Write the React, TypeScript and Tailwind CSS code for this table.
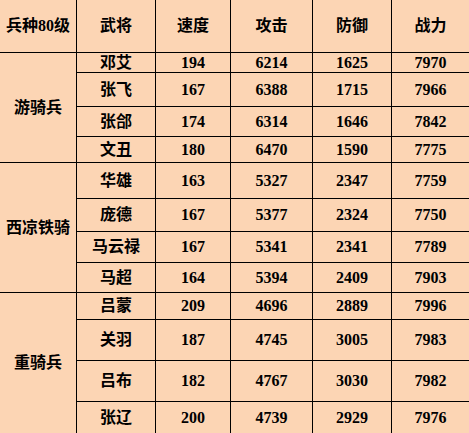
import React from "react";

type Row = { name: string; spd: string; atk: string; def: string; pow: string };
type Group = { label: string; rows: Row[] };

const groups: Group[] = [
  {
    label: "游骑兵",
    rows: [
      { name: "邓艾", spd: "194", atk: "6214", def: "1625", pow: "7970" },
      { name: "张飞", spd: "167", atk: "6388", def: "1715", pow: "7966" },
      { name: "张郃", spd: "174", atk: "6314", def: "1646", pow: "7842" },
      { name: "文丑", spd: "180", atk: "6470", def: "1590", pow: "7775" },
    ],
  },
  {
    label: "西凉铁骑",
    rows: [
      { name: "华雄", spd: "163", atk: "5327", def: "2347", pow: "7759" },
      { name: "庞德", spd: "167", atk: "5377", def: "2324", pow: "7750" },
      { name: "马云禄", spd: "167", atk: "5341", def: "2341", pow: "7789" },
      { name: "马超", spd: "164", atk: "5394", def: "2409", pow: "7903" },
    ],
  },
  {
    label: "重骑兵",
    rows: [
      { name: "吕蒙", spd: "209", atk: "4696", def: "2889", pow: "7996" },
      { name: "关羽", spd: "187", atk: "4745", def: "3005", pow: "7983" },
      { name: "吕布", spd: "182", atk: "4767", def: "3030", pow: "7982" },
      { name: "张辽", spd: "200", atk: "4739", def: "2929", pow: "7976" },
    ],
  },
];

const headers = ["兵种80级", "武将", "速度", "攻击", "防御", "战力"];

export default function App() {
  const cells: React.ReactNode[] = [];
  headers.forEach((h, i) => {
    cells.push(
      <div
        key={"h" + i}
        className={
          i === 5
            ? "flex items-center justify-center border-b border-black"
            : "flex items-center justify-center border-b border-r border-black"
        }
      >
        {h}
      </div>
    );
  });
  groups.forEach((g, gi) => {
    const lastGroup = gi === groups.length - 1;
    g.rows.forEach((r, ri) => {
      const lastRow = lastGroup && ri === g.rows.length - 1;
      if (ri === 0) {
        cells.push(
          <div
            key={"g" + gi}
            className={
              lastGroup
                ? "row-span-4 flex items-center justify-center border-r border-black"
                : "row-span-4 flex items-center justify-center border-r border-b border-black"
            }
          >
            {g.label}
          </div>
        );
      }
      const vals = [r.name, r.spd, r.atk, r.def, r.pow];
      vals.forEach((v, vi) => {
        let cls = "flex items-center justify-center border-black";
        if (!lastRow) cls += " border-b";
        if (vi !== 4) cls += " border-r";
        cells.push(
          <div key={`c${gi}-${ri}-${vi}`} className={cls}>
            {v}
          </div>
        );
      });
    });
  });

  return (
    <div className="w-[469px] h-[433px] bg-[#fcd5b4] overflow-hidden">
      <div className="grid grid-cols-[77px_79px_75px_82px_79px_77px] grid-rows-[53px_20px_34px_30px_26px_36px_33px_31px_30px_27px_41px_41px_31px] text-[16px] font-bold text-black leading-none font-['Liberation_Serif','Noto_Sans_CJK_SC',serif]">
        {cells}
      </div>
    </div>
  );
}
